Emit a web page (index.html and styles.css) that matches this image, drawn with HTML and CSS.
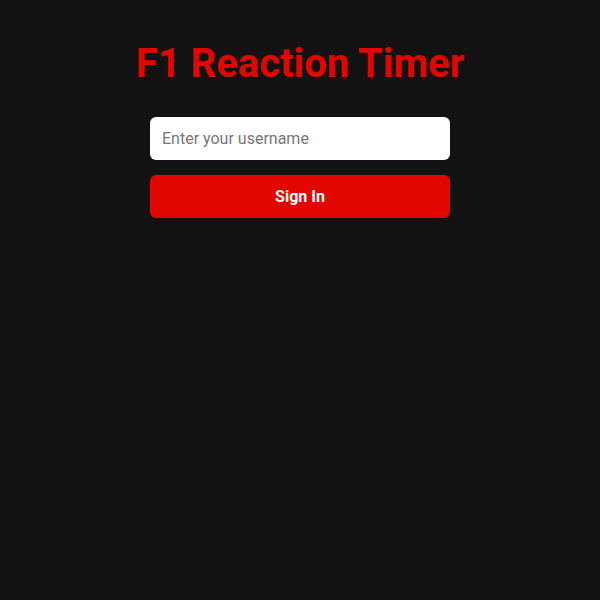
FILE: index.html
```html
<!DOCTYPE html>
<html lang="en">
<head>
<meta charset="utf-8">
<title>F1 Reaction Timer</title>
<link rel="stylesheet" href="styles.css">
</head>
<body>
<main class="app">
  <h1 class="title">F1 Reaction Timer</h1>
  <form class="login" onsubmit="return false;">
    <input class="username" type="text" placeholder="Enter your username">
    <button class="signin" type="submit">Sign In</button>
  </form>
</main>
</body>
</html>
```
FILE: styles.css
```css
html, body {
  margin: 0;
  padding: 0;
  background: #121212;
  height: 100%;
}
body {
  font-family: Roboto, "Liberation Sans", sans-serif;
  color: #fff;
}
.app {
  display: flex;
  flex-direction: column;
  align-items: center;
  padding-top: 40px;
}
.title {
  margin: 0 0 30px;
  font-size: 40px;
  font-weight: 700;
  color: #e10600;
  line-height: 47px;
}
.login {
  display: flex;
  flex-direction: column;
  gap: 15px;
  width: 300px;
}
.username {
  box-sizing: border-box;
  height: 43px;
  width: 100%;
  border: none;
  border-radius: 6px;
  background: #fff;
  padding: 0 12px;
  font-family: inherit;
  font-size: 16px;
  color: #222;
  outline: none;
}
.username::placeholder {
  color: #777;
}
.signin {
  box-sizing: border-box;
  height: 43px;
  width: 100%;
  border: none;
  border-radius: 6px;
  background: #e10600;
  color: #fff;
  font-family: inherit;
  font-size: 16px;
  font-weight: 700;
  cursor: pointer;
}
```
